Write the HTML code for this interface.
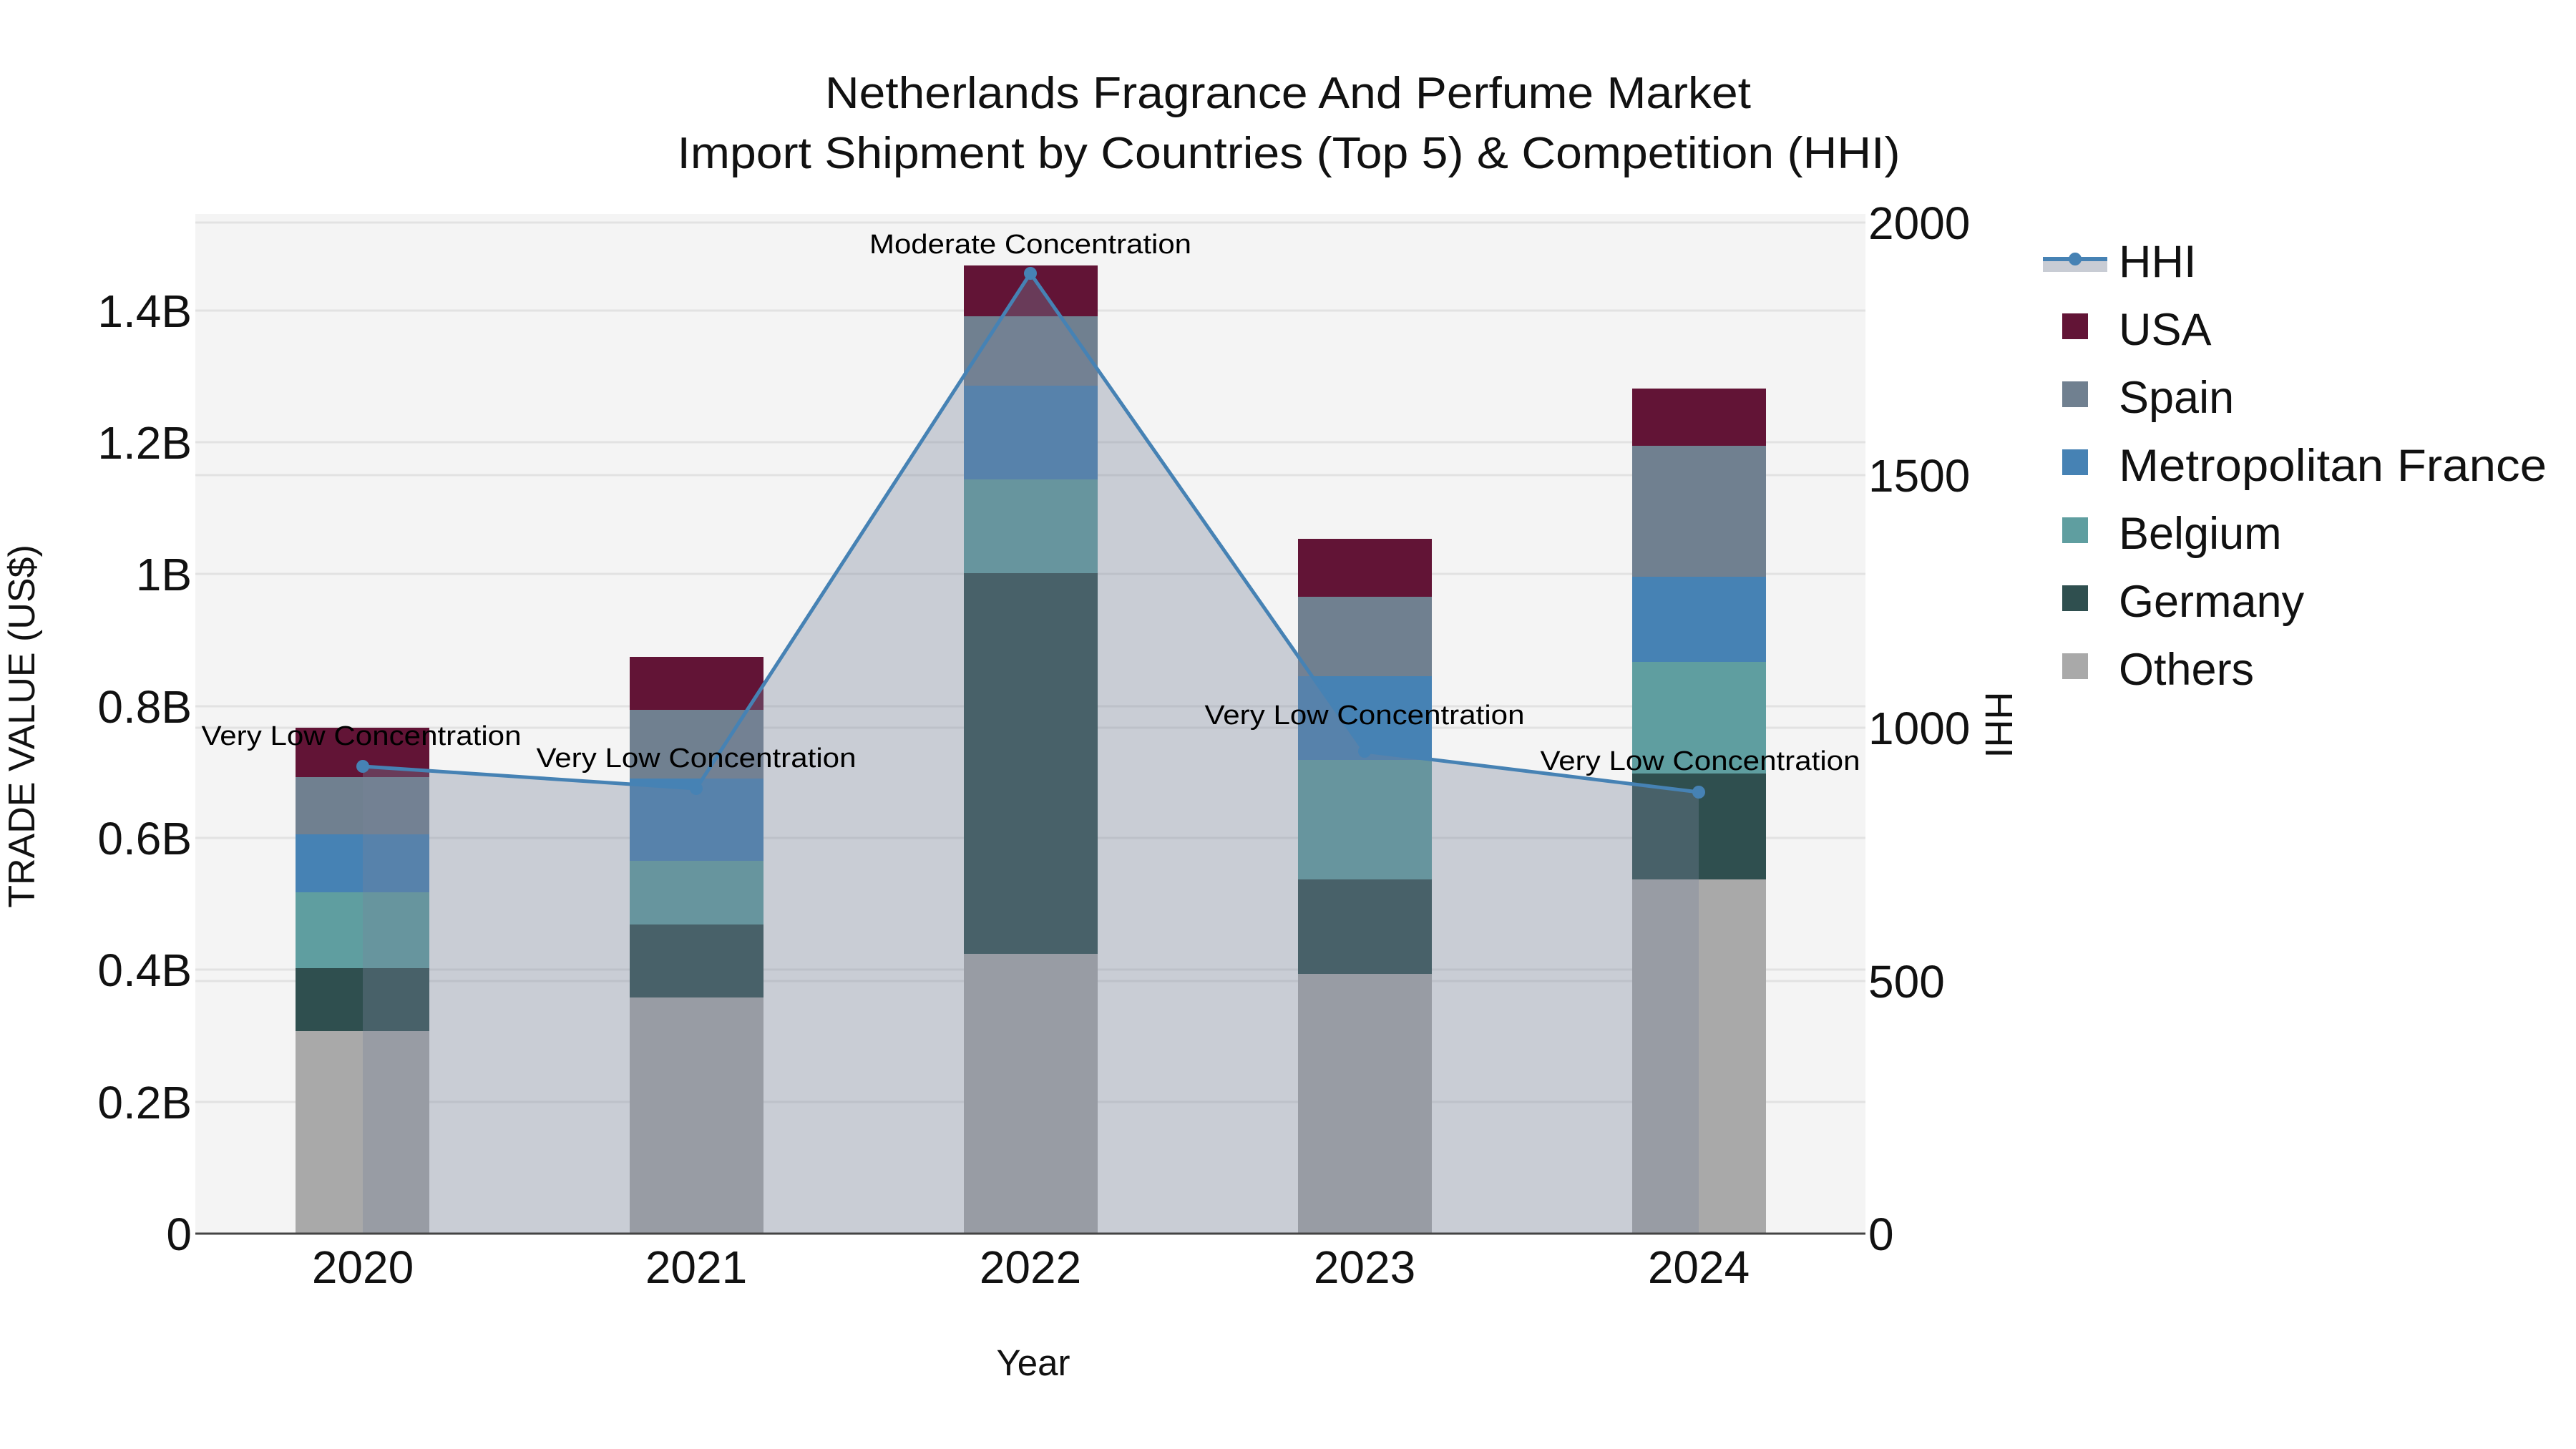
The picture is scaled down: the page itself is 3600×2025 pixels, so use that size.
<!DOCTYPE html>
<html><head><meta charset="utf-8"><style>
html,body{margin:0;padding:0;background:#fff;}
svg{display:block;font-family:"Liberation Sans",sans-serif;}
</style></head><body>
<svg width="3600" height="2025" viewBox="0 0 3600 2025" xmlns="http://www.w3.org/2000/svg">
<rect width="3600" height="2025" fill="#fff"/>
<rect x="273" y="299" width="2334" height="1425" fill="#f4f4f4"/>
<g stroke="#e2e2e2" stroke-width="3">
<line x1="273" x2="2607" y1="1540" y2="1540"/><line x1="273" x2="2607" y1="1355" y2="1355"/>
<line x1="273" x2="2607" y1="1171" y2="1171"/><line x1="273" x2="2607" y1="987" y2="987"/>
<line x1="273" x2="2607" y1="802" y2="802"/><line x1="273" x2="2607" y1="618" y2="618"/>
<line x1="273" x2="2607" y1="434" y2="434"/>
<line x1="273" x2="2607" y1="1371" y2="1371"/><line x1="273" x2="2607" y1="1017" y2="1017"/>
<line x1="273" x2="2607" y1="664" y2="664"/><line x1="273" x2="2607" y1="311" y2="311"/>
</g>
<g>
<rect x="413" y="1441" width="187" height="283" fill="#a9a9a9"/>
<rect x="413" y="1353" width="187" height="88" fill="#2f4f4f"/>
<rect x="413" y="1247" width="187" height="106" fill="#5f9ea0"/>
<rect x="413" y="1166" width="187" height="81" fill="#4682b4"/>
<rect x="413" y="1086" width="187" height="80" fill="#708090"/>
<rect x="413" y="1017" width="187" height="69" fill="#621436"/>
<rect x="880" y="1394" width="187" height="330" fill="#a9a9a9"/>
<rect x="880" y="1292" width="187" height="102" fill="#2f4f4f"/>
<rect x="880" y="1203" width="187" height="89" fill="#5f9ea0"/>
<rect x="880" y="1088" width="187" height="115" fill="#4682b4"/>
<rect x="880" y="992" width="187" height="96" fill="#708090"/>
<rect x="880" y="918" width="187" height="74" fill="#621436"/>
<rect x="1347" y="1333" width="187" height="391" fill="#a9a9a9"/>
<rect x="1347" y="801" width="187" height="532" fill="#2f4f4f"/>
<rect x="1347" y="670" width="187" height="131" fill="#5f9ea0"/>
<rect x="1347" y="539" width="187" height="131" fill="#4682b4"/>
<rect x="1347" y="442" width="187" height="97" fill="#708090"/>
<rect x="1347" y="371" width="187" height="71" fill="#621436"/>
<rect x="1814" y="1361" width="187" height="363" fill="#a9a9a9"/>
<rect x="1814" y="1229" width="187" height="132" fill="#2f4f4f"/>
<rect x="1814" y="1062" width="187" height="167" fill="#5f9ea0"/>
<rect x="1814" y="945" width="187" height="117" fill="#4682b4"/>
<rect x="1814" y="834" width="187" height="111" fill="#708090"/>
<rect x="1814" y="753" width="187" height="81" fill="#621436"/>
<rect x="2281" y="1229" width="187" height="495" fill="#a9a9a9"/>
<rect x="2281" y="1081" width="187" height="148" fill="#2f4f4f"/>
<rect x="2281" y="925" width="187" height="156" fill="#5f9ea0"/>
<rect x="2281" y="806" width="187" height="119" fill="#4682b4"/>
<rect x="2281" y="623" width="187" height="183" fill="#708090"/>
<rect x="2281" y="543" width="187" height="80" fill="#621436"/>
</g>
<polygon points="507,1724 507,1071 973,1102 1440,382 1907,1050 2374,1107 2374,1724" fill="rgb(120,131,154)" fill-opacity="0.35"/>
<polyline points="507,1071 973,1102 1440,382 1907,1050 2374,1107" fill="none" stroke="#4682b4" stroke-width="5" stroke-linejoin="round"/>
<g fill="#4682b4">
<circle cx="507" cy="1071" r="9"/><circle cx="973" cy="1102" r="9"/><circle cx="1440" cy="382" r="9"/>
<circle cx="1907" cy="1050" r="9"/><circle cx="2374" cy="1107" r="9"/>
</g>
<line x1="273" x2="2607" y1="1724" y2="1724" stroke="#444" stroke-width="3"/>
<g font-size="38" fill="#000" text-anchor="middle">
<text x="505" y="1041" textLength="447" lengthAdjust="spacingAndGlyphs">Very Low Concentration</text>
<text x="973" y="1072" textLength="447" lengthAdjust="spacingAndGlyphs">Very Low Concentration</text>
<text x="1440" y="354" textLength="450" lengthAdjust="spacingAndGlyphs">Moderate Concentration</text>
<text x="1907" y="1012" textLength="447" lengthAdjust="spacingAndGlyphs">Very Low Concentration</text>
<text x="2376" y="1076" textLength="447" lengthAdjust="spacingAndGlyphs">Very Low Concentration</text>
</g>
<g font-size="64" fill="#111" text-anchor="end">
<text x="268" y="1747">0</text>
<text x="268" y="1563">0.2B</text>
<text x="268" y="1378">0.4B</text>
<text x="268" y="1194">0.6B</text>
<text x="268" y="1010">0.8B</text>
<text x="268" y="825">1B</text>
<text x="268" y="641">1.2B</text>
<text x="268" y="457">1.4B</text>
</g>
<g font-size="64" fill="#111">
<text x="2611" y="1747">0</text>
<text x="2611" y="1394">500</text>
<text x="2611" y="1040">1000</text>
<text x="2611" y="687">1500</text>
<text x="2611" y="334">2000</text>
</g>
<g font-size="64" fill="#111" text-anchor="middle">
<text x="507" y="1793">2020</text><text x="973" y="1793">2021</text><text x="1440" y="1793">2022</text>
<text x="1907" y="1793">2023</text><text x="2374" y="1793">2024</text>
</g>
<text x="1444" y="1922" font-size="51" fill="#111" text-anchor="middle">Year</text>
<text transform="translate(48,1015) rotate(-90)" font-size="52" fill="#111" text-anchor="middle">TRADE VALUE (US$)</text>
<text transform="translate(2775,1013) rotate(90)" font-size="54" fill="#111" text-anchor="middle">HHI</text>
<g font-size="62" fill="#111" text-anchor="middle">
<text x="1800" y="151" textLength="1294" lengthAdjust="spacingAndGlyphs">Netherlands Fragrance And Perfume Market</text>
<text x="1801" y="235" textLength="1709" lengthAdjust="spacingAndGlyphs">Import Shipment by Countries (Top 5) &amp; Competition (HHI)</text>
</g>
<rect x="2855" y="362" width="90" height="18" fill="#c8ccd4"/>
<line x1="2855" x2="2945" y1="362" y2="362" stroke="#4682b4" stroke-width="6"/>
<circle cx="2900" cy="362" r="9" fill="#4682b4"/>
<rect x="2882" y="438" width="36" height="36" fill="#621436"/>
<rect x="2882" y="533" width="36" height="36" fill="#708090"/>
<rect x="2882" y="628" width="36" height="36" fill="#4682b4"/>
<rect x="2882" y="723" width="36" height="36" fill="#5f9ea0"/>
<rect x="2882" y="818" width="36" height="36" fill="#2f4f4f"/>
<rect x="2882" y="913" width="36" height="36" fill="#a9a9a9"/>
<g font-size="63" fill="#111">
<text x="2961" y="387">HHI</text>
<text x="2961" y="482">USA</text>
<text x="2961" y="577">Spain</text>
<text x="2961" y="672" textLength="598" lengthAdjust="spacingAndGlyphs">Metropolitan France</text>
<text x="2961" y="767">Belgium</text>
<text x="2961" y="862">Germany</text>
<text x="2961" y="957">Others</text>
</g>
</svg>
</body></html>
